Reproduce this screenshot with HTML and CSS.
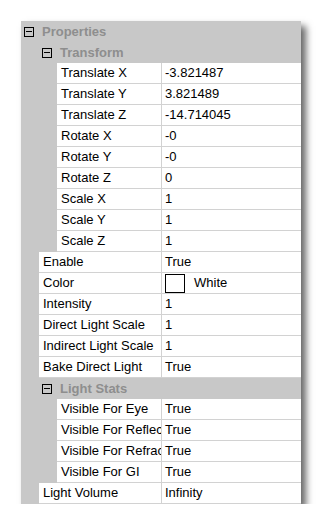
FILE: index.html
```html
<!DOCTYPE html><html>
<head><title>Properties</title>
	<link rel="stylesheet" href="styles.css">
</head><body>
<div class="panel">
	<div class="head"><span class="tog"></span>Properties</div>
	<div class="sub">
		<div class="head"><span class="tog"></span>Transform</div>
		<div class="sub">
			<div class="row"><div class="lbl">Translate X</div><div class="val">-3.821487</div></div>
			<div class="row"><div class="lbl">Translate Y</div><div class="val">3.821489</div></div>
			<div class="row"><div class="lbl">Translate Z</div><div class="val">-14.714045</div></div>
			<div class="row"><div class="lbl">Rotate X</div><div class="val">-0</div></div>
			<div class="row"><div class="lbl">Rotate Y</div><div class="val">-0</div></div>
			<div class="row"><div class="lbl">Rotate Z</div><div class="val">0</div></div>
			<div class="row"><div class="lbl">Scale X</div><div class="val">1</div></div>
			<div class="row"><div class="lbl">Scale Y</div><div class="val">1</div></div>
			<div class="row"><div class="lbl">Scale Z</div><div class="val">1</div></div>
		</div>
		<div class="row"><div class="lbl">Enable</div><div class="val">True</div></div>
		<div class="row"><div class="lbl">Color</div><div class="val"><span class="swatch"></span>White</div></div>
		<div class="row"><div class="lbl">Intensity</div><div class="val">1</div></div>
		<div class="row"><div class="lbl">Direct Light Scale</div><div class="val">1</div></div>
		<div class="row"><div class="lbl">Indirect Light Scale</div><div class="val">1</div></div>
		<div class="row"><div class="lbl">Bake Direct Light</div><div class="val">True</div></div>
		<div class="head"><span class="tog"></span>Light Stats</div>
		<div class="sub">
			<div class="row"><div class="lbl">Visible For Eye</div><div class="val">True</div></div>
			<div class="row"><div class="lbl">Visible For Reflec</div><div class="val">True</div></div>
			<div class="row"><div class="lbl">Visible For Refrac</div><div class="val">True</div></div>
			<div class="row"><div class="lbl">Visible For GI</div><div class="val">True</div></div>
		</div>
		<div class="row"><div class="lbl">Light Volume</div><div class="val">Infinity</div></div>
	</div>
</div>
</body></html>
```
FILE: styles.css
```css
html{background:#fff;}
body{margin:0;padding:0;font-family:"Liberation Sans",Arial,sans-serif;font-size:13px;color:#000;}
.panel{
	width:280px;
	margin:21px 0 0 21px;
	background:#c8c8c8;
	box-shadow:5px 5px 7px rgba(0,0,0,0.6);
}
.head{
	height:21px;
	display:flex;
	align-items:center;
	padding-left:3px;
	font-weight:bold;
	color:#8e8e8e;
}
.tog{
	position:relative;
	width:10px;height:10px;
	box-sizing:border-box;
	border:1px solid #000;
	margin-right:8px;
	flex:none;
}
.tog::after{
	content:"";
	position:absolute;
	left:1px;right:1px;top:3px;
	height:1px;
	background:#000;
}
.sub{padding-left:18px;}
.row{
	display:flex;
	height:20px;
	line-height:20px;
	background:#fff;
	border-bottom:1px solid #d2d2d2;
}
.lbl{flex:1;padding-left:4px;overflow:hidden;white-space:nowrap;}
.val{
	width:136px;
	padding-left:3px;
	border-left:1px solid #d2d2d2;
	white-space:nowrap;
	display:flex;
	align-items:center;
}
.swatch{
	width:20px;height:19px;
	box-sizing:border-box;
	border:1px solid #000;
	background:#fff;
	margin-right:9px;
}
```
